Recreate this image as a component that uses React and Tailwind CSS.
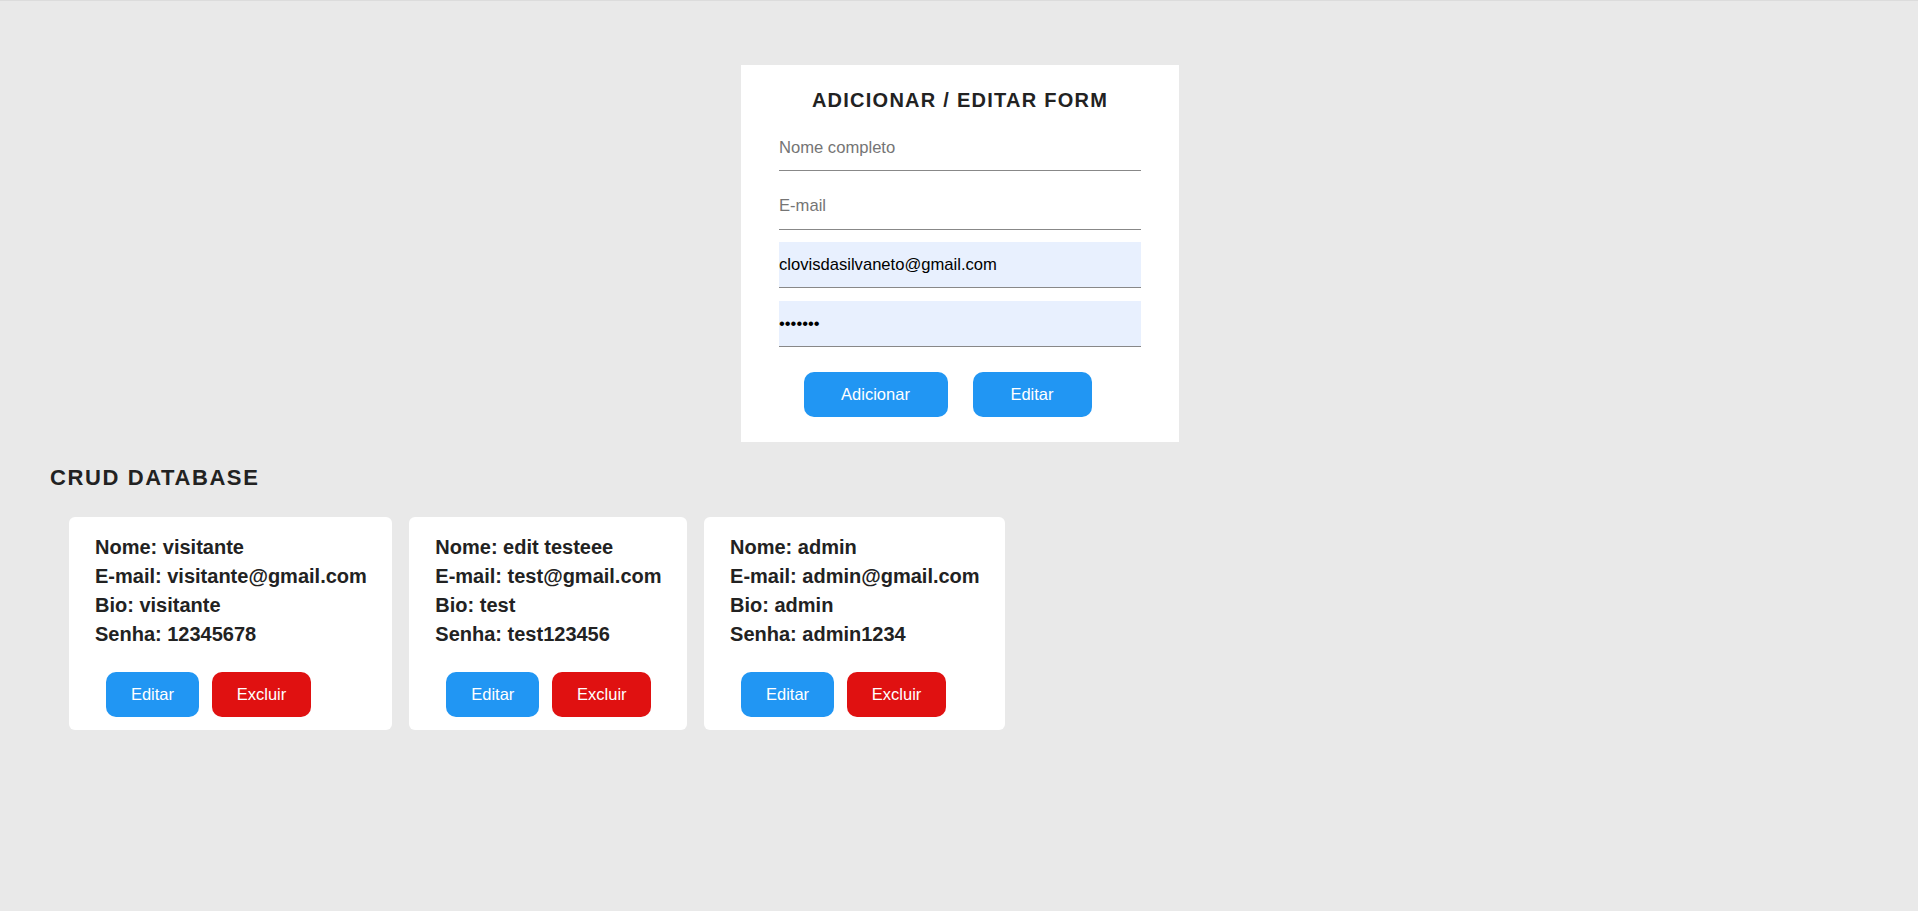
import React from "react";

const users = [
  { nome: "visitante", email: "visitante@gmail.com", bio: "visitante", senha: "12345678" },
  { nome: "edit testeee", email: "test@gmail.com", bio: "test", senha: "test123456" },
  { nome: "admin", email: "admin@gmail.com", bio: "admin", senha: "admin1234" },
];

export default function App() {
  return (
    <div
      className="min-h-[911px] w-full bg-[#e9e9e9] border-t border-[#dcdcdc] text-[#222222]"
      style={{ fontFamily: '"Liberation Sans", Arial, sans-serif' }}
    >
      <div className="flex justify-center pl-[2px] pt-[64px]">
        <div className="w-[438px] bg-white px-[38px] pt-[24px] pb-[25px]">
          <h2 className="text-center text-[20px] font-bold tracking-[1.25px] leading-[23px] text-[#222222]">
            ADICIONAR / EDITAR FORM
          </h2>
          <div className="mt-[13px] flex flex-col gap-[12.7px]">
            <input
              type="text"
              placeholder="Nome completo"
              readOnly
              className="h-[46px] w-full border-b border-[#888888] bg-transparent text-[16.6px] text-black outline-none placeholder:text-[#757575]"
            />
            <input
              type="text"
              placeholder="E-mail"
              readOnly
              className="h-[46px] w-full border-b border-[#888888] bg-transparent text-[16.6px] text-black outline-none placeholder:text-[#757575]"
            />
            <input
              type="text"
              defaultValue="clovisdasilvaneto@gmail.com"
              readOnly
              className="h-[46px] w-full border-b border-[#888888] bg-[#e8f0fe] text-[16.6px] text-black outline-none"
            />
            <input
              type="password"
              defaultValue="1234567"
              readOnly
              className="h-[46px] w-full border-b border-[#888888] bg-[#e8f0fe] text-[16.6px] text-black outline-none"
            />
          </div>
          <div className="mt-[25px] flex justify-center">
            <button className="mr-[25px] h-[45px] w-[144px] rounded-[10px] bg-[#2196f3] text-[16.5px] text-white">
              Adicionar
            </button>
            <button className="mr-[25px] h-[45px] w-[119px] rounded-[10px] bg-[#2196f3] text-[16.5px] text-white">
              Editar
            </button>
          </div>
        </div>
      </div>

      <div className="pl-[50px] mt-[23px]">
        <h2 className="text-[22px] font-bold tracking-[1.6px] leading-[25px] text-[#222222]">
          CRUD DATABASE
        </h2>
        <div className="mt-[27px] flex items-start gap-[17.5px] pl-[19px]">
          {users.map((u) => (
            <div key={u.email} className="rounded-[6px] bg-white pl-[26px] pr-[25px] pt-[16px] pb-[13px]">
              <div className="text-[20px] font-bold leading-[29px] text-[#222222] whitespace-nowrap">
                <p>Nome: {u.nome}</p>
                <p>E-mail: {u.email}</p>
                <p>Bio: {u.bio}</p>
                <p>Senha: {u.senha}</p>
              </div>
              <div className="mt-[23px] flex gap-[13px] pl-[11px]">
                <button className="h-[45px] w-[93px] rounded-[10px] bg-[#2196f3] text-[16.5px] text-white">
                  Editar
                </button>
                <button className="h-[45px] w-[99px] rounded-[10px] bg-[#e01111] text-[16.5px] text-white">
                  Excluir
                </button>
              </div>
            </div>
          ))}
        </div>
      </div>
    </div>
  );
}
